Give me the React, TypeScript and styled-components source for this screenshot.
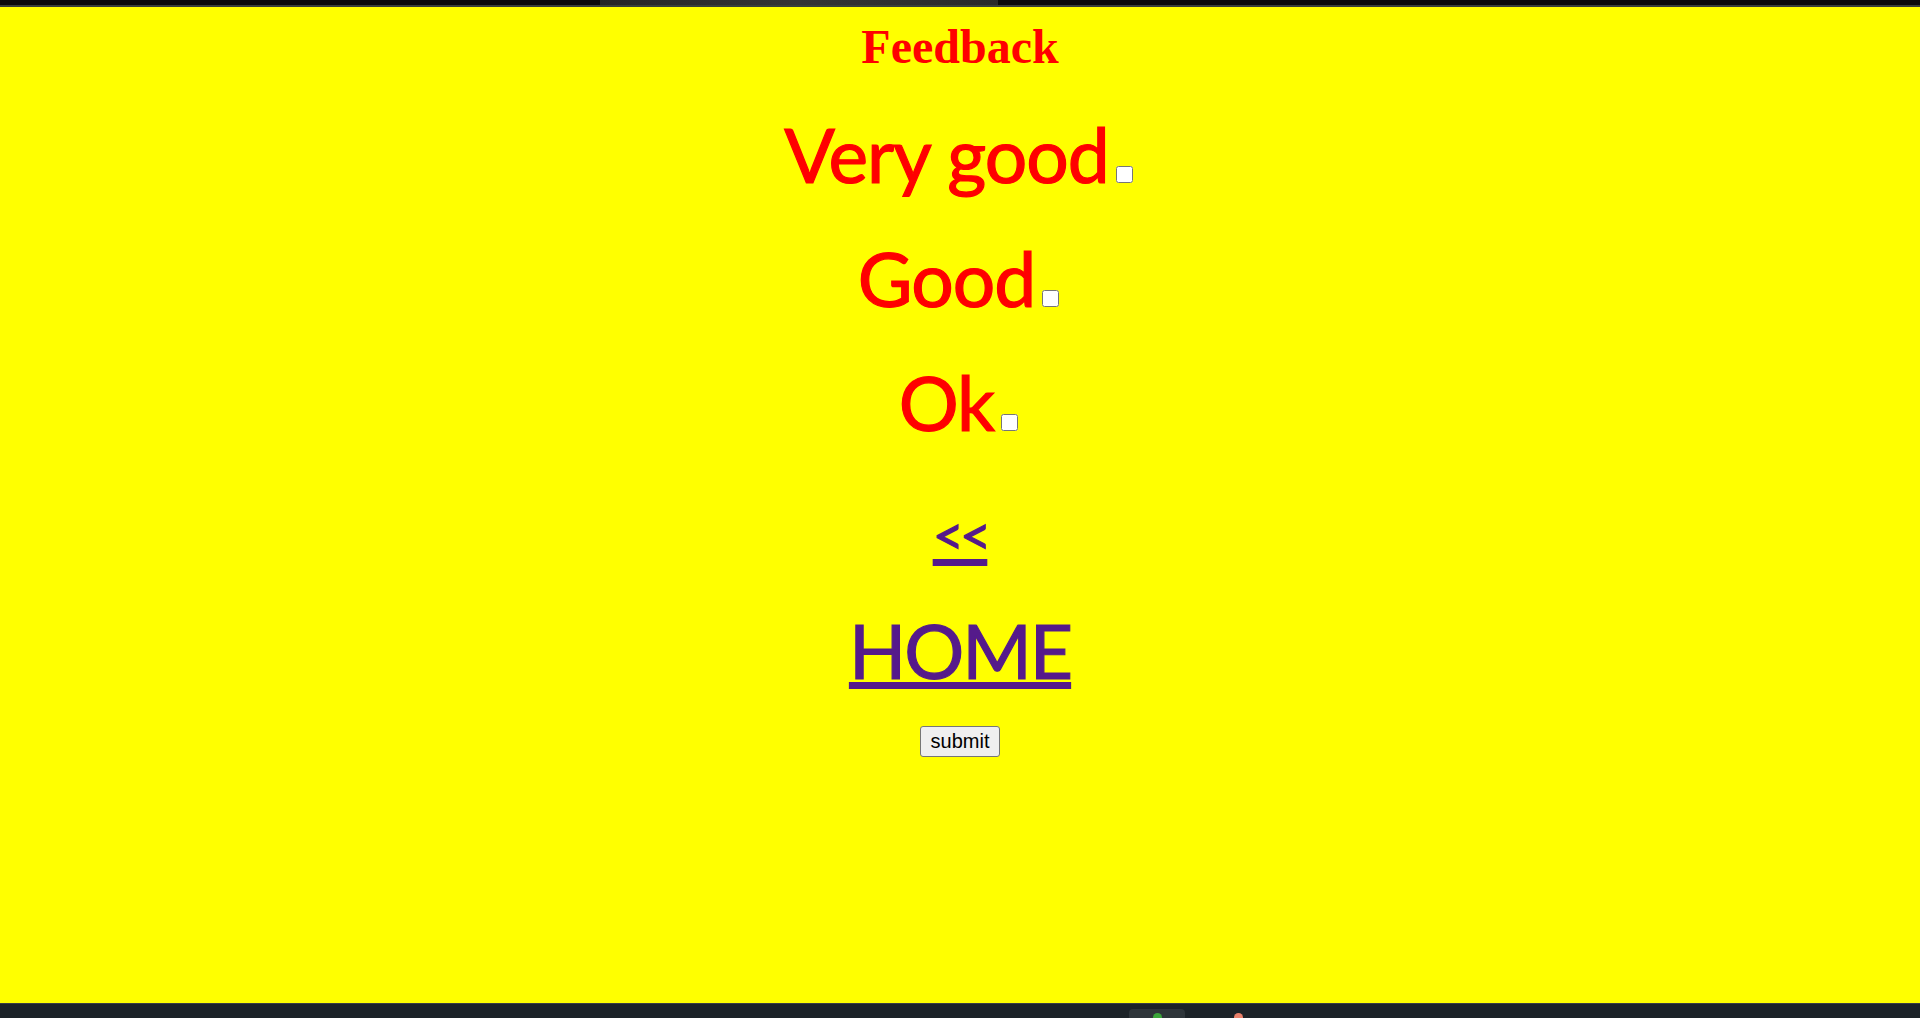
import React from "react";
import styled, { createGlobalStyle } from "styled-components";

const GlobalStyle = createGlobalStyle`
  html, body {
    margin: 0;
    padding: 0;
    height: 100%;
    background: #ffff00;
  }
  #root {
    height: 100%;
  }
`;

const Frame = styled.div`
  display: flex;
  flex-direction: column;
  height: 100vh;
  overflow: hidden;
`;

const TopStrip = styled.div`
  display: flex;
  height: 5px;
  flex: none;
  background: #0b0b0b;
  border-bottom: 2px solid #39403a;
`;

const StripSpacer = styled.div<{ $w: number }>`
  width: ${(p) => p.$w}px;
  flex: none;
`;

const StripTab = styled.div`
  width: 398px;
  flex: none;
  background: linear-gradient(90deg, #262626, #353535 50%, #2a2a2a);
`;

const Page = styled.main`
  flex: 1;
  background: #ffff00;
  display: flex;
  flex-direction: column;
  align-items: center;
`;

const Title = styled.h1`
  margin: 12px 0 0;
  font-family: "Liberation Serif", "Times New Roman", serif;
  font-weight: 700;
  font-size: 48px;
  line-height: 55px;
  color: #ff0000;
`;

const Row = styled.div<{ $top?: number }>`
  margin-top: ${(p) => p.$top ?? 0}px;
  height: 124px;
  line-height: 124px;
  font-family: "Comic Sans MS", Lato, sans-serif;
  font-size: 75px;
  letter-spacing: -1px;
  white-space: nowrap;
  text-align: center;
`;

const OptionLabel = styled.label`
  color: #ff0000;
  -webkit-text-stroke: 1.2px #ff0000;
`;

const Check = styled.input`
  width: 17px;
  height: 17px;
  margin: 3px 3px 2px 7px;
  vertical-align: baseline;
`;

const NavLink = styled.a<{ $small?: boolean }>`
  color: #551a8b;
  -webkit-text-stroke: 1.2px #551a8b;
  font-size: ${(p) => (p.$small ? "54px" : "75px")};
  letter-spacing: ${(p) => (p.$small ? "-4px" : "-2px")};
  text-decoration: underline;
  text-decoration-thickness: 7px;
  text-underline-offset: ${(p) => (p.$small ? "4px" : "3px")};
`;

const SubmitButton = styled.button`
  margin-top: 14px;
  font-family: "Liberation Sans", Arial, sans-serif;
  font-size: 20px;
  line-height: 23px;
  padding: 3px 10px;
  color: #000000;
  background: #efefef;
  border: 1px solid #767676;
  border-radius: 3px;
`;

const BottomBar = styled.div`
  height: 14px;
  flex: none;
  display: flex;
  align-items: flex-end;
  background: #1c2328;
  border-top: 1px solid #3a3f44;
`;

const TaskItem = styled.div`
  width: 56px;
  height: 9px;
  flex: none;
  border-radius: 4px 4px 0 0;
  background: #2e353a;
  display: flex;
  justify-content: center;
  align-items: flex-end;
`;

const Dot = styled.div<{ $c: string }>`
  width: 9px;
  height: 5px;
  border-radius: 5px 5px 0 0;
  background: ${(p) => p.$c};
  flex: none;
`;

const options = [
  { id: "verygood", text: "Very good" },
  { id: "good", text: "Good" },
  { id: "ok", text: "Ok" },
];

export default function App() {
  return (
    <Frame>
      <GlobalStyle />
      <TopStrip>
        <StripSpacer $w={600} />
        <StripTab />
      </TopStrip>
      <Page>
        <Title>Feedback</Title>
        {options.map((o, i) => (
          <Row key={o.id} $top={i === 0 ? 18 : 0}>
            <OptionLabel htmlFor={o.id}>{o.text}</OptionLabel>
            <Check type="checkbox" id={o.id} />
          </Row>
        ))}
        <Row>
          <NavLink href="#back" $small>
            &lt;&lt;
          </NavLink>
        </Row>
        <Row>
          <NavLink href="#home">HOME</NavLink>
        </Row>
        <SubmitButton type="button">submit</SubmitButton>
      </Page>
      <BottomBar>
        <StripSpacer $w={1129} />
        <TaskItem>
          <Dot $c="#3aa53a" />
        </TaskItem>
        <StripSpacer $w={49} />
        <Dot $c="#e9806a" />
      </BottomBar>
    </Frame>
  );
}
